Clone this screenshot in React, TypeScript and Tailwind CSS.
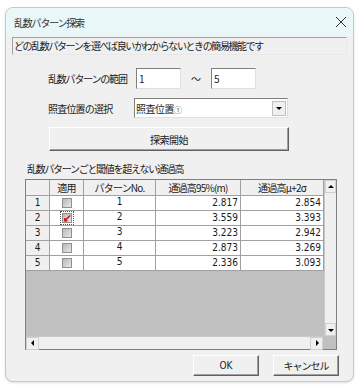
import React from "react";

const rows = [
  { no: 1, a: "2.817", b: "2.854", checked: false },
  { no: 2, a: "3.559", b: "3.393", checked: true },
  { no: 3, a: "3.223", b: "2.942", checked: false },
  { no: 4, a: "2.873", b: "3.269", checked: false },
  { no: 5, a: "2.336", b: "3.093", checked: false },
];

const font = { fontFamily: '"Noto Sans CJK JP", "Liberation Sans", sans-serif' };
const narrow = { fontFamily: '"Liberation Sans Narrow", "DejaVu Sans Condensed", sans-serif' };

function CheckBox({ checked }: { checked: boolean }) {
  return (
    <div
      className={`flex h-[10px] w-[10px] items-center justify-center border border-[#909090] bg-gradient-to-br from-[#b8b8b8] to-[#e8e8e8] ${
        checked ? "outline outline-1 outline-dotted outline-offset-1 outline-[#555]" : ""
      }`}
    >
      {checked && (
        <svg width="9" height="9" viewBox="0 0 9 9">
          <path d="M8 1 L2 7 M2 4 L2 7 L5 7" stroke="#d01010" strokeWidth="1.6" fill="none" />
        </svg>
      )}
    </div>
  );
}

function Arrow({ dir }: { dir: "up" | "down" | "left" | "right" }) {
  const d = {
    up: "M1 5 L4 2 L7 5 Z",
    down: "M1 3 L4 6 L7 3 Z",
    left: "M5 1 L2 4 L5 7 Z",
    right: "M3 1 L6 4 L3 7 Z",
  }[dir];
  return (
    <svg width="8" height="8" viewBox="0 0 8 8">
      <path d={d} fill="#000" />
    </svg>
  );
}

const sunken = "border border-t-[#808080] border-l-[#808080] border-b-[#e0e0e0] border-r-[#e0e0e0] bg-white";
const raised =
  "border border-b-[#606060] border-r-[#606060] border-t-[#fff] border-l-[#fff] bg-[#f0f0f0] shadow-[inset_-1px_-1px_0_#a0a0a0]";

export default function App() {
  return (
    <div className="h-[388px] w-[361px] bg-white pl-[5px] pt-[7px] text-[10px] text-[#1a1a1a]" style={font}>
      <div className="flex h-[375px] w-[349px] flex-col overflow-hidden rounded-lg border border-[#c8c8c8] bg-[#f0f0f0] shadow-sm">
        {/* title bar */}
        <div className="flex h-[28px] items-center justify-between bg-[#e9f7f8] pl-[8px] pr-[6px]">
          <span className="tracking-[-1.2px] text-[#333]">乱数パターン探索</span>
          <svg width="12" height="12" viewBox="0 0 12 12">
            <path d="M1 1 L11 11 M11 1 L1 11" stroke="#333" strokeWidth="1" />
          </svg>
        </div>

        <div className="mx-[6px] mt-[1px] flex h-[18px] items-center border border-t-[#a0a0a0] border-l-[#a0a0a0] border-b-[#e8e8e8] border-r-[#e8e8e8] pl-[1px] leading-none tracking-[-1.4px]">
          どの乱数パターンを選べば良いかわからないときの簡易機能です
        </div>

        {/* range */}
        <div className="mt-[13px] flex items-center pl-[42px]">
          <span className="w-[88px] whitespace-nowrap tracking-[-1.2px]">乱数パターンの範囲</span>
          <div className={`flex h-[21px] w-[45px] items-center pl-[2px] ${sunken}`}>1</div>
          <span className="w-[30px] text-center text-[10px]">～</span>
          <div className={`flex h-[21px] w-[45px] items-center pl-[2px] ${sunken}`}>5</div>
        </div>

        {/* select */}
        <div className="mt-[9px] flex items-center pl-[42px]">
          <span className="w-[86px] whitespace-nowrap tracking-[-0.8px]">照査位置の選択</span>
          <div className={`flex h-[20px] w-[154px] items-center justify-between pl-[1px] pr-[1px] ${sunken}`}>
            <span className="tracking-[-0.5px]">
              照査位置<span className="text-[8px] text-[#555]">①</span>
            </span>
            <div className="flex h-[15px] w-[14px] items-center justify-center border border-[#c0c0c0] bg-[#f0f0f0]">
              <Arrow dir="down" />
            </div>
          </div>
        </div>

        {/* search button */}
        <div className="mt-[9px] pl-[43px]">
          <div className={`flex h-[24px] w-[240px] items-center justify-center tracking-[-0.5px] ${raised}`}>探索開始</div>
        </div>

        {/* group */}
        <div className="mt-[13px] pl-[21px] leading-none tracking-[-1.3px]">乱数パターンごと閾値を超えない通過高</div>

        <div className="ml-[19px] mt-[5px] flex h-[171px] w-[312px] flex-col border border-[#808080]">
          <div className="flex flex-1 overflow-hidden">
            <div className="flex flex-1 flex-col bg-[#c0c0c0]">
              <div className="flex h-[16px] bg-[#f0f0f0] leading-none tracking-[-0.8px]">
                <div className="w-[24px] border-b border-r border-[#a0a0a0]" />
                <div className="flex w-[34px] items-center justify-center border-b border-r border-[#a0a0a0]">適用</div>
                <div className="flex w-[72px] items-center justify-center border-b border-r border-[#a0a0a0]">パターンNo.</div>
                <div className="flex w-[85px] items-center justify-center border-b border-r border-[#a0a0a0]">通過高95%(m)</div>
                <div className="flex w-[83px] items-center justify-center border-b border-r border-[#a0a0a0]">通過高μ+2σ</div>
              </div>
              {rows.map((r) => (
                <div key={r.no} className="flex h-[15px] text-[10px] leading-none" style={narrow}>
                  <div className="flex w-[24px] items-center justify-center border-b border-r border-[#a0a0a0] bg-[#f0f0f0]">{r.no}</div>
                  <div className="flex w-[34px] items-center justify-center border-b border-r border-[#a0a0a0] bg-white">
                    <CheckBox checked={r.checked} />
                  </div>
                  <div className="flex w-[72px] items-start justify-center border-b border-r border-[#a0a0a0] bg-white pt-[1px]">{r.no}</div>
                  <div className="flex w-[85px] items-center justify-end border-b border-r border-[#a0a0a0] bg-white pr-[2px]">{r.a}</div>
                  <div className="flex w-[83px] items-center justify-end border-b border-r border-[#a0a0a0] bg-white pr-[2px]">{r.b}</div>
                </div>
              ))}
            </div>
            {/* vertical scrollbar */}
            <div className="flex w-[13px] flex-col justify-between border-l border-[#c8c8c8] bg-[#f0f0f0]">
              <div className="flex h-[13px] items-center justify-center border border-[#d0d0d0] bg-[#f0f0f0]">
                <Arrow dir="up" />
              </div>
              <div className="flex h-[13px] items-center justify-center border border-[#d0d0d0] bg-[#f0f0f0]">
                <Arrow dir="down" />
              </div>
            </div>
          </div>
          {/* horizontal scrollbar */}
          <div className="flex h-[13px]">
            <div className="flex flex-1 items-center justify-between border-t border-[#c8c8c8] bg-[#f0f0f0]">
              <div className="flex h-[13px] w-[13px] items-center justify-center border border-[#d0d0d0]">
                <Arrow dir="left" />
              </div>
              <div className="flex h-[13px] w-[13px] items-center justify-center border border-[#d0d0d0]">
                <Arrow dir="right" />
              </div>
            </div>
            <div className="w-[13px] bg-[#c0c0c0]" />
          </div>
        </div>

        {/* bottom buttons */}
        <div className="mt-[5px] flex justify-end gap-[14px] pr-[14px]">
          <div className={`flex h-[21px] w-[66px] items-center justify-center ${raised}`} style={narrow}>
            OK
          </div>
          <div className={`flex h-[21px] w-[66px] items-center justify-center tracking-[-1px] ${raised}`}>キャンセル</div>
        </div>
      </div>
    </div>
  );
}
